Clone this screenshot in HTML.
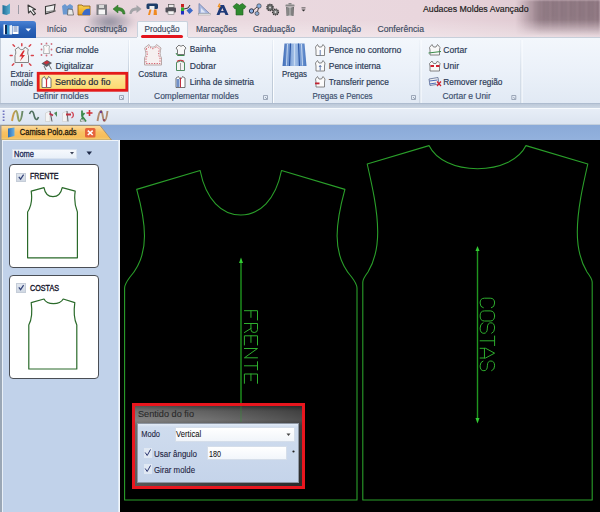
<!DOCTYPE html>
<html><head><meta charset="utf-8">
<style>
*{margin:0;padding:0;box-sizing:border-box}
html,body{width:600px;height:512px;overflow:hidden;background:#000;font-family:"Liberation Sans",sans-serif;position:relative}
.a{position:absolute}
svg{position:absolute;overflow:visible}
</style></head><body>
<!-- TITLE BAR -->
<div class="a" style="left:0;top:0;width:600px;height:38px;background:linear-gradient(90deg,#e6d3da 0%,#ead9df 40%,#e9d6dd 70%,#dcc5cd 100%)"></div>
<div class="a" style="left:0;top:20px;width:600px;height:18px;background:linear-gradient(rgba(255,255,255,0) ,rgba(255,255,255,0.35))"></div>
<div class="a" style="left:515px;top:0px;width:85px;height:36px;background:rgba(85,62,74,0.5);-webkit-mask-image:linear-gradient(90deg,transparent 0%,#000 30%),linear-gradient(#000 55%,transparent 100%);-webkit-mask-composite:source-in;mask-composite:intersect;filter:blur(1px)"></div>
<div class="a" style="left:520px;top:0px;width:80px;height:32px;background:repeating-linear-gradient(90deg,rgba(40,28,36,0.22) 0px,rgba(40,28,36,0) 3px,rgba(40,28,36,0.18) 6px,rgba(40,28,36,0) 9px);-webkit-mask-image:linear-gradient(90deg,transparent 0%,#000 35%),linear-gradient(#000 50%,transparent 100%);-webkit-mask-composite:source-in;mask-composite:intersect;filter:blur(1.2px)"></div>
<div class="a" style="left:88px;top:10px;width:48px;height:22px;background:radial-gradient(ellipse at 45% 55%,rgba(70,80,105,0.55) 0%,rgba(70,80,105,0) 70%);filter:blur(2px)"></div>
<!-- tab row line -->
<div class="a" style="left:0;top:37px;width:600px;height:1px;background:#c7cfda"></div>
<!-- app button -->
<div class="a" style="left:0;top:21px;width:36px;height:17px;background:linear-gradient(#4a82d4,#2a62b8 50%,#1f55aa);border-radius:0 3px 0 0"></div>
<!-- Producao tab -->
<div class="a" style="left:136.5px;top:21px;width:51px;height:18px;background:linear-gradient(#f8fafd,#f1f5fa);border:1px solid #c9d2dd;border-bottom:none;border-radius:2px 2px 0 0"></div>
<svg style="left:0;top:0" width="320" height="22">
<defs>
<linearGradient id="bk" x1="0" y1="0" x2="1" y2="0"><stop offset="0" stop-color="#1e6e98"/><stop offset="1" stop-color="#5aaed0"/></linearGradient>
<linearGradient id="fold" x1="0" y1="0" x2="0" y2="1"><stop offset="0" stop-color="#f8d050"/><stop offset="1" stop-color="#e8a020"/></linearGradient>
<linearGradient id="trash" x1="0" y1="0" x2="1" y2="0"><stop offset="0" stop-color="#6a6a6a"/><stop offset="0.5" stop-color="#c8c8c8"/><stop offset="1" stop-color="#5a5a5a"/></linearGradient>
</defs>
<!-- app icon -->
<path d="M2.5,5 L6.5,6 L10,3.5 L10,13.5 L6.5,15 L2.5,14 Z" fill="url(#bk)"/>
<rect x="18" y="5" width="1" height="9" fill="#9a9aa4"/>
<!-- arrow cursor -->
<path d="M28,5 L28.5,13 L30.5,11 L33.5,15 L35.5,13.5 L32.5,10 L35.5,9.5 Z" fill="#f4f4f4" stroke="#3a3a3a" stroke-width="1.1" stroke-linejoin="round"/>
<!-- paper -->
<path d="M45.5,6.5 C49,6 52,5.5 55,4.5 L54,11.5 C51,12 48.5,13 45.5,14 Z" fill="#eeeeee" stroke="#3a3a3a" stroke-width="1.1"/>
<path d="M46,12 C49,11.5 52,10.5 56,11" fill="none" stroke="#555" stroke-width="0.8"/>
<!-- blue shirt + hand -->
<path d="M62,6 L65,4 L67,6 L70,4 L73,6 L72,14.5 L63,14.5 Z" fill="#6a98d0"/>
<path d="M68,9 L72.5,9.5 L73.5,15 L67.5,15 Z" fill="#e8e8e8" stroke="#555" stroke-width="0.7"/>
<!-- folder -->
<path d="M78,5 L82,5 L83,6 L90,6 L90,15 L78,15 Z" fill="url(#fold)" stroke="#8a5a10" stroke-width="0.8"/>
<path d="M82,14 C84,9 87,8 90,9 L90,15 L83,15 Z" fill="#3a6ac8"/>
<!-- floppy -->
<rect x="96.5" y="4.5" width="10.5" height="10.5" fill="#7a7a80"/>
<rect x="98.5" y="9.5" width="6.5" height="5" fill="#f6f6f6"/>
<rect x="99" y="5" width="5" height="3" fill="#d8d8d8"/>
<!-- undo -->
<path d="M125,14 C125,9.5 122,7.5 118,7.5 L118,5 L113,9 L118,13 L118,10.5 C120.5,10.5 122.5,11.5 123,14 Z" fill="#3c8a34" stroke="#2a6a24" stroke-width="0.5"/>
<!-- redo -->
<path d="M129.5,14 C129.5,9.5 132.5,7.5 136.5,7.5 L136.5,5 L141.5,9 L136.5,13 L136.5,10.5 C134,10.5 132,11.5 131.5,14 Z" fill="#a4a4a8"/>
<!-- figure -->
<rect x="146.5" y="3.5" width="11.5" height="5.5" rx="1.5" fill="#1e3e6a"/>
<rect x="149.5" y="6" width="5" height="4" fill="#f0f0f0"/>
<path d="M148,15 L149.5,9.5 L151.5,9.5 L150,15 Z M153.5,15 L154,9.5 L156.5,9.5 L157,15 Z" fill="#f08a20"/>
<!-- printer -->
<rect x="168.5" y="4.5" width="5.5" height="3" fill="#eaeaea" stroke="#555" stroke-width="0.7"/>
<rect x="165.5" y="7.5" width="10.5" height="5" rx="1" fill="#505058"/>
<rect x="168" y="11" width="6" height="3.5" fill="#f4f4f4" stroke="#666" stroke-width="0.5"/>
<!-- colorful network -->
<rect x="181" y="4" width="3" height="3.5" fill="#c82020"/>
<rect x="181" y="7.5" width="3" height="3.5" fill="#30b030"/>
<rect x="181" y="11" width="3" height="3.5" fill="#2030c0"/>
<path d="M184,9 L188,8 L190,5" stroke="#333" stroke-width="1" fill="none"/>
<path d="M186.5,10.5 L190,7.5 L193,10.5 L189.5,14 Z" fill="#3a68c8"/>
<!-- triangle ruler -->
<path d="M199,3.5 L199,14 L210,14 Z" fill="#a8b8e0" stroke="#7080a8" stroke-width="0.8"/>
<path d="M201,8 L201,12.5 L205.5,12.5 Z" fill="#dfe6f5"/>
<rect x="198.5" y="13.5" width="12" height="1.5" fill="#f0f0f0" stroke="#888" stroke-width="0.4"/>
<!-- A with lightning -->
<path d="M216.5,15 L220.5,5 L224,5 L228.5,15 L225.5,15 L222.3,8 L219.5,15 Z" fill="#1e3a78"/><rect x="220" y="11" width="5" height="1.6" fill="#1e3a78"/>
<path d="M219,3.5 L217.5,7 L219,7 L218,10 L221,6 L219.5,6 L220.5,3.5 Z" fill="#f09020"/>
<!-- green shirt -->
<path d="M233,6.5 L236.5,3.5 L238.5,4.5 C239,5.5 240,5.5 240.5,4.5 L242.5,3.5 L246,6.5 L244,9 L243,8.5 L243,15 L236,15 L236,8.5 L235,9 Z" fill="#2f8a2f" stroke="#1f5f1f" stroke-width="0.6"/>
<!-- network -->
<circle cx="251.5" cy="11" r="2.2" fill="#8ab0e0" stroke="#223" stroke-width="0.9"/>
<circle cx="259" cy="6" r="2.2" fill="#8ab0e0" stroke="#333" stroke-width="0.6"/>
<circle cx="257" cy="13.5" r="2" fill="#8aa8d0" stroke="#333" stroke-width="0.6"/>
<path d="M253.5,10 L257,7 M258.5,8 L257.5,11.5" stroke="#333" stroke-width="0.9"/>
<!-- gears -->
<circle cx="270" cy="7.5" r="3.2" fill="#6a6a6a" stroke="#333" stroke-width="1.2" stroke-dasharray="1.2,0.8"/>
<circle cx="275.5" cy="12" r="3" fill="#7a7a7a" stroke="#333" stroke-width="1.2" stroke-dasharray="1.2,0.8"/>
<circle cx="270" cy="7.5" r="1" fill="#ddd"/><circle cx="275.5" cy="12" r="0.9" fill="#ddd"/>
<!-- trash -->
<rect x="285.5" y="4.5" width="9" height="2" rx="0.6" fill="#888"/>
<rect x="288.5" y="3" width="3" height="1.5" fill="#888"/>
<path d="M286,7 L294,7 L293.5,16 L286.5,16 Z" fill="url(#trash)"/>
<path d="M288.3,8 L288.3,15 M290,8 L290,15 M291.7,8 L291.7,15" stroke="#555" stroke-width="0.5"/>
<!-- dropdown -->
<rect x="301.5" y="7.5" width="4" height="0.8" fill="#333"/>
<path d="M301.5,9.5 L305.5,9.5 L303.5,11.5 Z" fill="#333"/>
</svg>
<!-- app button icon -->
<svg style="left:0;top:0" width="40" height="40">
<rect x="3.5" y="24.5" width="2" height="10" fill="#ffffff"/>
<path d="M6,24.5 L9.5,25.5 L9.5,34.5 L6,34.5 Z" fill="#3a9ad0"/>
<rect x="5" y="25" width="2" height="9" fill="#0a2a5a"/>
<path d="M9.5,25.5 L12,25 L12,34.5 L9.5,34.5 Z" fill="#e8f0fa"/>
<rect x="12.5" y="26" width="6" height="8" fill="#ffffff"/>
<path d="M13.5,27 h4 M13.5,29 h4 M13.5,31 h4" stroke="#3a5aa0" stroke-width="0.8"/>
<path d="M25.5,28.5 L31,28.5 L28.25,31.5 Z" fill="#ffffff"/>
</svg>

<!-- RIBBON -->
<div class="a" style="left:0;top:38px;width:600px;height:66px;background:linear-gradient(#f3f7fc 0%,#ebf1f9 50%,#e1e9f4 100%)"></div>
<div class="a" style="left:136.5px;top:37px;width:51px;height:2px;background:#f5f8fc"></div>
<div class="a" style="left:140.5px;top:35.4px;width:42px;height:2.8px;background:#e3141c;border-radius:1.5px"></div>
<svg style="left:0;top:0" width="600" height="110">
<defs>
<linearGradient id="sepg" x1="0" y1="0" x2="0" y2="1"><stop offset="0" stop-color="#d6dfea" stop-opacity="0.3"/><stop offset="0.5" stop-color="#c4cfdc"/><stop offset="1" stop-color="#bac6d5"/></linearGradient>
<linearGradient id="hlg" x1="0" y1="0" x2="0" y2="1"><stop offset="0" stop-color="#fde9a2"/><stop offset="0.5" stop-color="#fde184"/><stop offset="1" stop-color="#fcd86e"/></linearGradient>
<linearGradient id="pleat" x1="0" y1="0" x2="1" y2="0"><stop offset="0" stop-color="#3e6cb8"/><stop offset="0.5" stop-color="#a8c4ea"/><stop offset="1" stop-color="#4a78c0"/></linearGradient>
</defs>
<!-- separators -->
<g fill="url(#sepg)">
<rect x="128" y="40" width="1" height="63"/><rect x="272" y="40" width="1" height="63"/><rect x="419.5" y="40" width="1" height="63"/><rect x="520.5" y="40" width="1" height="63"/>
</g>
<g fill="#fbfdff"><rect x="129" y="40" width="1" height="63"/><rect x="273" y="40" width="1" height="63"/><rect x="420.5" y="40" width="1" height="63"/><rect x="521.5" y="40" width="1" height="63"/></g>
<rect x="0" y="38" width="1" height="66" fill="#c5ced9"/>
<!-- launchers -->
<g fill="none" stroke="#8a96a8" stroke-width="0.8">
<path d="M119.5,95.5 h4 v4 h-4 z M121,97 l2,2"/>
<path d="M263.5,95.5 h4 v4 h-4 z M265,97 l2,2"/>
<path d="M411.5,95.5 h4 v4 h-4 z M413,97 l2,2"/>
<path d="M511.8,95.5 h4 v4 h-4 z M513.3,97 l2,2"/>
</g>
<!-- highlight box -->
<rect x="38.2" y="73.3" width="88.6" height="17" fill="url(#hlg)" stroke="#e31b1b" stroke-width="2.8"/>
<!-- Extrair icon -->
<g stroke="#d8444c" stroke-width="1.5" stroke-linecap="round">
<path d="M21.8,43.8 L21.8,45.8 M13,44.8 L14.5,46.3 M30.7,44.8 L29.2,46.3 M10.2,55.5 L12.2,55.5 M31.3,55.5 L33.3,55.5 M12.3,65.3 L13.8,63.8 M21.8,64.5 L21.8,66.3 M30.9,65.3 L29.4,63.8"/>
</g>
<path d="M15.2,49.5 L18.5,47 C19.5,50.5 24,50.5 25,47 L28.3,49.5 C27.5,52 27.5,54 28.5,55.5 L28.5,62.5 L15,62.5 L15,55.5 C16,54 16,52 15.2,49.5 Z" fill="#f4f4f4" stroke="#777" stroke-width="0.9"/>
<path d="M23.2,50.5 L19.3,56.5 L22,56.5 L19.8,61.5 L25,55 L22.5,55 L24.8,50.5 Z" fill="#d82b30"/>
<!-- Criar molde icon -->
<g fill="#d07080"><circle cx="41.5" cy="44" r="0.9"/><circle cx="46.5" cy="43.5" r="0.9"/><circle cx="51.5" cy="44" r="0.9"/><circle cx="41.5" cy="49.5" r="0.9"/><circle cx="51.5" cy="49.5" r="0.9"/><circle cx="41.5" cy="55" r="0.9"/><circle cx="46.5" cy="55.5" r="0.9"/><circle cx="51.5" cy="55" r="0.9"/></g>
<path d="M43.5,46 L45.5,45 C46,46.5 47,46.5 47.5,45 L49.5,46 L49,49 L49.5,53.5 L43.5,53.5 L44,49 Z" fill="#fafafa" stroke="#999" stroke-width="0.7"/>
<!-- Digitalizar icon -->
<path d="M41.5,63.5 L47,60 L52,63 L46.5,67 Z" fill="#5a5a62"/>
<path d="M43.5,62.5 L47,60.8 L49.5,62.5 L46,64.5 Z" fill="#c8303a"/>
<path d="M44,66 L46,70 M49,65 L51.5,69.5" stroke="#6a6a6a" stroke-width="1"/>
<!-- Sentido icon -->
<path d="M42,78.5 L44.5,76.5 L45.5,79 L47.5,79 L48.5,76.5 L51,78.5 L51,87.5 L42,87.5 Z" fill="#fff" stroke="#555" stroke-width="0.8"/>
<path d="M46.5,79 L46.5,87" stroke="#d03040" stroke-width="1.2"/>
<!-- Costura icon -->
<path d="M144.5,48 L149,44.5 C150,48 155.5,48 156.5,44.5 L161,48 C160,52 159.5,55 161.5,58 L161.5,65 L144.5,65 L144.5,58 C146.5,55 146,52 144.5,48 Z" fill="#f6f0f0" stroke="#b8a8a8" stroke-width="1"/>
<path d="M146,49 L149.5,46.5 C151,49.5 154.5,49.5 156,46.5 L159.5,49 C158.5,52.5 158,55 160,58 L160,63.5 L146,63.5 L146,58 C148,55 147.5,52.5 146,49 Z" fill="none" stroke="#d05060" stroke-width="0.9" stroke-dasharray="1.3,1.3"/>
<!-- Bainha icon -->
<path d="M176,48 L179,45 C180,46.5 182,46.5 183,45 L186,48 L184.5,50 L184.5,54.5 L177.5,54.5 L177.5,50 Z" fill="#f8f8f8" stroke="#555" stroke-width="0.8"/>
<path d="M176,53 L177.5,55.5 L184.5,55.5" fill="none" stroke="#3a8a4a" stroke-width="1"/>
<!-- Dobrar icon -->
<path d="M176.5,62.5 Q180.5,59.5 184.5,62.5 L184.5,70.5 L176.5,70.5 Z" fill="#f4f4f4" stroke="#3d8050" stroke-width="0.9"/>
<path d="M177,61.5 Q180.5,59 184,61.5" fill="none" stroke="#c03038" stroke-width="1.2"/>
<path d="M180.5,63 L180.5,70" stroke="#777" stroke-width="0.7"/>
<!-- Linha icon -->
<path d="M176,78 L178.5,76.5 L179.5,78.5 L181.5,78.5 L182.5,76.5 L185,78 L185,87.5 L176,87.5 Z" fill="#fff" stroke="#555" stroke-width="0.8"/>
<rect x="176.5" y="79" width="3" height="8" fill="#7090c8"/>
<path d="M180.5,77.5 L180.5,87.5" stroke="#c03040" stroke-width="1"/>
<!-- Pregas icon -->
<path d="M284.5,43.5 L304.5,43.5 L306.5,66 L282.5,66 Z" fill="url(#pleat)"/>
<path d="M290.5,43.5 L289.5,66 M298.5,43.5 L299.5,66" stroke="#2f5aa8" stroke-width="1.2"/>
<path d="M287.5,44 L286.5,65.5 M294.5,44 L294.5,65.5 M301.5,44 L302.5,65.5" stroke="#c8daf2" stroke-width="1"/>
<!-- Pence icons -->
<g fill="#fbfbfb" stroke="#6a6a6a" stroke-width="0.8">
<path d="M315.5,47 L317.5,44.5 L319,47 L321.5,47 L323,44.5 L325,47 L324.5,50 L324.5,55.5 L316,55.5 L316,50 Z"/>
<path d="M315.5,63 L317.5,60.5 L319,63 L321.5,63 L323,60.5 L325,63 L324.5,66 L324.5,71 L316,71 L316,66 Z"/>
<path d="M315.5,79 L317.5,76.5 L319,79 L321.5,79 L323,76.5 L325,79 L324.5,82 L324.5,87 L316,87 L316,82 Z"/>
</g>
<path d="M320.2,50 L320.2,55.5 M320.2,65.5 L320.2,70.5 M319,67 L320.2,65.5 L321.4,67" stroke="#4060a0" stroke-width="0.8" fill="none"/>
<rect x="315" y="82.5" width="4.5" height="1.8" fill="#c02030"/>
<!-- Cortar icons -->
<path d="M429.5,47.5 L432,44.5 L433.5,47 L436,47 L437.5,44.5 L440,47.5 L439.5,50 L439.5,55 L430,55 L430,50 Z" fill="#f8f8f8" stroke="#666" stroke-width="0.8"/>
<path d="M428.5,53 L441,51.5" stroke="#3a8a4a" stroke-width="1"/>
<path d="M429.5,63.5 L432,61 L433.5,63.5 L436,63.5 L437.5,61 L440,63.5 L439.5,66 L439.5,71 L430,71 L430,66 Z" fill="#f8f8f8" stroke="#666" stroke-width="0.8"/>
<path d="M430.5,66 h3.5 M436,66 h3.5" stroke="#d02030" stroke-width="2"/>
<path d="M429,79 L438,77.5 L439,84 L430,85.5 Z" fill="#f2f2f2" stroke="#5a6a90" stroke-width="0.8"/>
<path d="M429.5,81 L437.5,80 M429.5,84 L436,83" stroke="#3a5ab0" stroke-width="0.9"/>
<path d="M437,81.5 L441,86 M441,81.5 L437,86" stroke="#d02030" stroke-width="1.2"/>
</svg>

<!-- BAND / TOOLSTRIP -->
<div class="a" style="left:0;top:103px;width:600px;height:1px;background:#aebccf"></div>
<div class="a" style="left:0;top:104px;width:600px;height:4px;background:linear-gradient(#bcc8d8,#cdd7e4)"></div>
<div class="a" style="left:0;top:108px;width:600px;height:17px;background:linear-gradient(#e8eef7,#dbe4f0)"></div>
<div class="a" style="left:0;top:108px;width:600px;height:1px;background:#f7fafd"></div>
<div class="a" style="left:0;top:124px;width:600px;height:1px;background:#c3cfdd"></div>
<svg style="left:0;top:0" width="130" height="130">
<g fill="#6f72c0"><rect x="2.7" y="110.5" width="1.8" height="1.5"/><rect x="2.7" y="113.5" width="1.8" height="1.5"/><rect x="2.7" y="116.5" width="1.8" height="1.5"/><rect x="2.7" y="119.5" width="1.8" height="1.5"/></g>
<defs><linearGradient id="wv1" x1="0" y1="0" x2="1" y2="0"><stop offset="0" stop-color="#d29a4a"/><stop offset="0.6" stop-color="#8fa060"/><stop offset="1" stop-color="#6a8a6a"/></linearGradient></defs>
<path d="M12,121 C13,115 14.5,111 16,111 C18,111 17.5,121 19.5,121 C21,121 22,115 22.5,111" fill="none" stroke="url(#wv1)" stroke-width="2"/>
<path d="M29.5,114 C31,110 33,110.5 34,115 C35,120 37,121 38.5,117" fill="none" stroke="#4f6f5f" stroke-width="1.6"/>
<path d="M45.5,113 L50,111 L50,121.5 L45.5,121.5 Z" fill="#f4f4f4" stroke="#c8c8c8" stroke-width="0.6"/>
<path d="M50,111 L52,121.5" stroke="#5a5a5a" stroke-width="1"/>
<path d="M49.5,113.5 L53,115.5" stroke="#b8304a" stroke-width="2"/>
<path d="M54,113 L57,111.5 L57,117 Z" fill="#4f8a5a"/>
<path d="M62.5,113 L67,111 L67,121.5 L62.5,121.5 Z" fill="#f4f4f4" stroke="#cdcdcd" stroke-width="0.6"/>
<path d="M67,111 L68,121.5" stroke="#6a6a6a" stroke-width="1"/>
<path d="M66,114.5 L71,114.5" stroke="#c03040" stroke-width="2"/>
<path d="M71.5,112 C74,113 74,117 71.5,118" fill="none" stroke="#d04050" stroke-width="1.3"/>
<path d="M82,110.5 L82,116 L86,121.5 M82,116 L84.5,113 M80.5,121.5 L83,117" stroke="#3d8a4a" stroke-width="1.8" fill="none"/>
<path d="M81,119 L85,121 L80.5,121.5 Z" fill="#e8e8e8" stroke="#888" stroke-width="0.5"/>
<path d="M89.5,110 L89.5,116 M86.5,113 L92.5,113" stroke="#d03038" stroke-width="1.6"/>
<path d="M97.5,121 C98.5,115 99.5,111 101,111 C103,111 102.5,121 104.5,121 C106,121 107,115 107.5,111" fill="none" stroke="#b08a70" stroke-width="1.9"/>
<circle cx="101" cy="112" r="1.2" fill="#6a3a8a"/><circle cx="104" cy="120" r="1.1" fill="#8a3a5a"/>
</svg>

<!-- DOC TABS -->
<div class="a" style="left:0;top:125px;width:600px;height:15px;background:linear-gradient(#8aaad8,#93b1dd)"></div>
<svg style="left:0;top:0" width="600" height="150">
<defs><linearGradient id="tabg" x1="0" y1="0" x2="0" y2="1">
<stop offset="0" stop-color="#fcdca0"/><stop offset="0.45" stop-color="#f9c264"/><stop offset="0.8" stop-color="#f6bd58"/><stop offset="1" stop-color="#f4d27a"/></linearGradient>
<linearGradient id="bookg" x1="0" y1="0" x2="1" y2="0"><stop offset="0" stop-color="#2f6fb5"/><stop offset="1" stop-color="#6ab0e0"/></linearGradient></defs>
<path d="M0,125.5 L100,125.5 L111.5,140 L0,140 Z" fill="url(#tabg)" stroke="#a08a6a" stroke-width="0.8"/>
<rect x="0" y="125" width="1.5" height="15" fill="#9a9aa0"/>
<path d="M8,128.5 L14.5,127.5 L14.5,136 L8,137.5 Z" fill="url(#bookg)"/>
<rect x="85" y="128" width="10.5" height="9.5" rx="1.5" fill="#e5643c"/>
<path d="M87.8,130.6 L92.7,135 M92.7,130.6 L87.8,135" stroke="#fff" stroke-width="1.6"/>
</svg>

<!-- PANEL -->
<div class="a" style="left:0;top:140px;width:120px;height:372px;background:#c1d2ea"></div>
<div class="a" style="left:0;top:140px;width:2px;height:372px;background:#9aa7b6"></div>
<div class="a" style="left:2px;top:140px;width:1px;height:372px;background:#e9f0f8"></div>
<div class="a" style="left:2px;top:140px;width:118px;height:1px;background:#eef3f9"></div>
<div class="a" style="left:118px;top:140px;width:1px;height:372px;background:#dfe9f5"></div>
<div class="a" style="left:119px;top:140px;width:1px;height:372px;background:#f4f8fc"></div>
<!-- combo -->
<div class="a" style="left:12px;top:149px;width:65px;height:10px;background:linear-gradient(#f6f9fd,#e9f0f9);border:1px solid #d8e2ef"></div>
<svg style="left:0;top:0" width="120" height="512">
<path d="M70,152 L74,152 L72,154.5 Z" fill="#3a4258"/>
<path d="M86.5,151.5 L92,151.5 L89.25,155 Z" fill="#1e2a48"/>
</svg>
<!-- cards -->
<div class="a" style="left:8.5px;top:164px;width:90.5px;height:103.5px;background:#fff;border:1.3px solid #4a4e55;border-radius:4px"></div>
<div class="a" style="left:8.5px;top:275px;width:90.5px;height:103.5px;background:#fff;border:1.3px solid #4a4e55;border-radius:4px"></div>
<!-- checkboxes -->
<div class="a" style="left:16px;top:172.5px;width:10px;height:9.5px;background:linear-gradient(#e2e7ef,#d0d8e3);border:1px solid #c5cdd8"></div>
<div class="a" style="left:16px;top:283px;width:10px;height:9.5px;background:linear-gradient(#e2e7ef,#d0d8e3);border:1px solid #c5cdd8"></div>
<svg style="left:0;top:0" width="120" height="512">
<path d="M18.8,176.8 L20.6,179.2 L23.6,174.6" fill="none" stroke="#34447a" stroke-width="1.2"/>
<path d="M18.8,287.3 L20.6,289.7 L23.6,285.1" fill="none" stroke="#34447a" stroke-width="1.2"/>
<g fill="none" stroke="#2a6a2a" stroke-width="1.2" stroke-linejoin="round">
<path d="M27.6,257.8 L27.6,212 C31.5,206 32.5,200 31.2,191.2 L44,187.6 C45,193.5 48,196.6 53,196.6 C58,196.6 61,193.5 62.2,187.6 L75.2,191.2 C73.9,200 74.9,206 77.4,212 L77.4,257.8 Z"/>
<path d="M28.8,369 L28.8,325 C32,319 32.5,312 31.2,302.6 L44,299 C45.5,302 48.5,303.7 53.5,303.7 C58.5,303.7 61.5,302 63.2,299 L74.8,302.6 C73.5,312 74,319 76.8,325 L76.8,369 Z"/>
</g>
</svg>

<!-- CANVAS -->
<div class="a" style="left:120px;top:140px;width:480px;height:372px;background:#000"></div>
<svg style="left:0;top:0" width="600" height="512" viewBox="0 0 600 512">
<g fill="none" stroke="#2a9f2a" stroke-width="1.1" stroke-linejoin="round">
<path d="M124.6,500 L124.6,288 C124.6,285 127,281 130,277 C138,268 144.5,255 144.5,236 C144.5,222 141,205 136.7,189.4 L200.1,170.5 C206,200 222,215 240.8,215 C259.6,215 275.6,200 281.5,170.5 L344.9,189.4 C340.6,205 337.1,222 337.1,236 C337.1,255 343.6,268 351.6,277 C354.6,281 357,285 357,288 L357,500 Z"/>
<path d="M362.8,500 L362.8,282 C362.8,279 365,276 368,272 C374,262 377.7,250 377.7,232 C377.7,210 372,185 367.2,164 L429,145.6 C436,160 455,168.8 477.5,168.8 C500,168.8 519,160 526,145.6 L587.8,164 C583,185 577.3,210 577.3,232 C577.3,250 581,262 587,272 C590,276 592.2,279 592.2,282 L592.2,500 Z"/>
</g>
<g stroke="#1f951f" stroke-width="1.4" fill="#3c3">
<line x1="241" y1="261" x2="241" y2="440"/>
<path d="M241,257.5 L243,263 L239,263 Z" stroke="none"/>
<line x1="477.5" y1="249" x2="477.5" y2="420"/>
<path d="M477.5,246 L479.5,251 L475.5,251 Z" stroke="none"/>
<path d="M477.5,423.5 L479.5,418 L475.5,418 Z" stroke="none"/>
</g>
<!--STROKETEXT--><g fill="none" stroke="#2eae2e" stroke-width="1.0" stroke-linecap="round" stroke-linejoin="round"><path d="M 244.40,310.70 L 257.50,310.70 L 257.50,320.00 M 250.95,310.70 L 250.95,317.40 M 244.40,323.50 L 257.50,323.50 L 257.50,329.62 Q 257.50,332.50 254.22,332.50 Q 250.95,332.50 250.95,329.62 L 250.95,323.50 M 250.95,328.45 L 244.40,332.50 M 257.50,345.00 L 257.50,335.80 L 244.40,335.80 L 244.40,345.00 M 250.95,335.80 L 250.95,342.42 M 244.40,348.50 L 257.50,348.50 L 244.40,357.80 L 257.50,357.80 M 257.50,361.70 L 257.50,369.90 M 257.50,365.80 L 244.40,365.80 M 257.50,383.30 L 257.50,374.00 L 244.40,374.00 L 244.40,383.30 M 250.95,374.00 L 250.95,380.70"/><path d="M 491.41,307.80 Q 494.60,307.32 494.60,303.00 Q 494.60,298.20 490.25,298.20 L 484.45,298.20 Q 480.10,298.20 480.10,303.00 Q 480.10,307.32 483.29,307.80 M 494.60,315.95 Q 494.60,321.00 490.25,321.00 L 484.45,321.00 Q 480.10,321.00 480.10,315.95 Q 480.10,310.90 484.45,310.90 L 490.25,310.90 Q 494.60,310.90 494.60,315.95 Z M 491.70,333.30 Q 494.60,332.25 494.60,328.05 Q 494.60,322.80 490.83,322.80 Q 487.35,322.80 487.35,328.05 Q 487.35,333.30 483.87,333.30 Q 480.10,333.30 480.10,328.05 Q 480.10,323.85 483.00,322.80 M 494.60,336.00 L 494.60,345.60 M 494.60,340.80 L 480.10,340.80 M 480.10,348.30 L 485.61,348.30 L 494.60,353.15 L 485.61,358.00 L 480.10,358.00 M 484.45,348.30 L 484.45,358.00 M 491.70,370.70 Q 494.60,369.73 494.60,365.85 Q 494.60,361.00 490.83,361.00 Q 487.35,361.00 487.35,365.85 Q 487.35,370.70 483.87,370.70 Q 480.10,370.70 480.10,365.85 Q 480.10,361.97 483.00,361.00"/></g><!--/STROKETEXT-->
</svg>

<div class="a" style="left:131.7px;top:402.7px;width:173.5px;height:86.5px;border:3.2px solid #e8161e;background:#1a1a1a"></div>
<div class="a" style="left:134.9px;top:405.9px;width:167px;height:80px;background:linear-gradient(#3a3a3a 0px,#5c5c5c 5px,#6e6e6e 14px,#555 20px,#3c3c3c 100%)"></div>
<div class="a" style="left:134.9px;top:405.9px;width:167px;height:80px;background:linear-gradient(90deg,rgba(255,255,255,0.14) 0%,rgba(255,255,255,0.02) 45%,rgba(0,0,0,0.2) 85%,rgba(0,0,0,0.3) 100%)"></div>
<div class="a" style="left:240.3px;top:406px;width:1.5px;height:16px;background:rgba(40,160,40,0.22)"></div>
<div class="a" style="left:136.7px;top:422.5px;width:162px;height:60px;background:linear-gradient(#e3ebf6 0px,#cfdcee 3px,#c5d4ea 100%);border:1px solid #8d96a3"></div>
<!-- checkboxes -->
<div class="a" style="left:143.5px;top:448px;width:8.5px;height:9.5px;background:rgba(230,236,245,0.8)"></div>
<div class="a" style="left:143.5px;top:464px;width:8.5px;height:9.5px;background:rgba(230,236,245,0.8)"></div>
<!-- combo -->
<div class="a" style="left:174.5px;top:427.3px;width:120px;height:14.5px;background:linear-gradient(#ffffff,#f1f5fa);border:1px solid #d5deea"></div>
<svg style="left:0;top:0" width="600" height="512"><path d="M286.5,433.5 L290.5,433.5 L288.5,436 Z" fill="#444"/>
<circle cx="293.5" cy="451.5" r="1.1" fill="#222"/>
<path d="M145.2,452.5 L147.2,455.5 L150.5,449.5" fill="none" stroke="#2a3570" stroke-width="1"/>
<path d="M145.2,468.5 L147.2,471.5 L150.5,465.5" fill="none" stroke="#2a3570" stroke-width="1"/>
</svg>
<!-- input -->
<div class="a" style="left:206.6px;top:446px;width:80.2px;height:14.4px;background:linear-gradient(#ffffff,#f2f6fb);border:1px solid #d5deea"></div>

<svg style="left:0;top:0" width="600" height="512" font-family="Liberation Sans">
<text x="423" y="12.2" font-size="9.6" fill="#1b1b1b" stroke="#1b1b1b" stroke-width="0.18" font-weight="normal" textLength="105.5" lengthAdjust="spacingAndGlyphs" >Audaces Moldes Avançado</text>
<text x="46.7" y="32.3" font-size="8.8" fill="#3a4960" stroke="#3a4960" stroke-width="0.15" font-weight="normal" textLength="20.0" lengthAdjust="spacingAndGlyphs" >Início</text>
<text x="84" y="32.3" font-size="8.8" fill="#3a4960" stroke="#3a4960" stroke-width="0.15" font-weight="normal" textLength="43" lengthAdjust="spacingAndGlyphs" >Construção</text>
<text x="144.5" y="32.3" font-size="8.8" fill="#3a4960" stroke="#3a4960" stroke-width="0.15" font-weight="normal" textLength="35.2" lengthAdjust="spacingAndGlyphs" >Produção</text>
<text x="196" y="32.3" font-size="8.8" fill="#3a4960" stroke="#3a4960" stroke-width="0.15" font-weight="normal" textLength="41" lengthAdjust="spacingAndGlyphs" >Marcações</text>
<text x="253" y="32.3" font-size="8.8" fill="#3a4960" stroke="#3a4960" stroke-width="0.15" font-weight="normal" textLength="42" lengthAdjust="spacingAndGlyphs" >Graduação</text>
<text x="312" y="32.3" font-size="8.8" fill="#3a4960" stroke="#3a4960" stroke-width="0.15" font-weight="normal" textLength="49" lengthAdjust="spacingAndGlyphs" >Manipulação</text>
<text x="377.5" y="32.3" font-size="8.8" fill="#3a4960" stroke="#3a4960" stroke-width="0.15" font-weight="normal" textLength="46.5" lengthAdjust="spacingAndGlyphs" >Conferência</text>
<text x="10.5" y="76.8" font-size="8.8" fill="#2b3a55" stroke="#2b3a55" stroke-width="0.18" font-weight="normal" textLength="22.5" lengthAdjust="spacingAndGlyphs" >Extrair</text>
<text x="10.5" y="86.2" font-size="8.8" fill="#2b3a55" stroke="#2b3a55" stroke-width="0.18" font-weight="normal" textLength="22.5" lengthAdjust="spacingAndGlyphs" >molde</text>
<text x="55.6" y="52.5" font-size="8.8" fill="#2b3a55" stroke="#2b3a55" stroke-width="0.18" font-weight="normal" textLength="43" lengthAdjust="spacingAndGlyphs" >Criar molde</text>
<text x="55.6" y="68.5" font-size="8.8" fill="#2b3a55" stroke="#2b3a55" stroke-width="0.18" font-weight="normal" textLength="37.7" lengthAdjust="spacingAndGlyphs" >Digitalizar</text>
<text x="55" y="84.8" font-size="8.8" fill="#1f2a3c" stroke="#1f2a3c" stroke-width="0.18" font-weight="normal" textLength="55.5" lengthAdjust="spacingAndGlyphs" >Sentido do fio</text>
<text x="33" y="98.7" font-size="8.8" fill="#3c4f6e" stroke="#3c4f6e" stroke-width="0.18" font-weight="normal" textLength="55.5" lengthAdjust="spacingAndGlyphs" >Definir moldes</text>
<text x="138.3" y="76.8" font-size="8.8" fill="#2b3a55" stroke="#2b3a55" stroke-width="0.18" font-weight="normal" textLength="28.9" lengthAdjust="spacingAndGlyphs" >Costura</text>
<text x="189.8" y="52.3" font-size="8.8" fill="#2b3a55" stroke="#2b3a55" stroke-width="0.18" font-weight="normal" textLength="25.9" lengthAdjust="spacingAndGlyphs" >Bainha</text>
<text x="189.8" y="68.5" font-size="8.8" fill="#2b3a55" stroke="#2b3a55" stroke-width="0.18" font-weight="normal" textLength="26.2" lengthAdjust="spacingAndGlyphs" >Dobrar</text>
<text x="189.8" y="85" font-size="8.8" fill="#2b3a55" stroke="#2b3a55" stroke-width="0.18" font-weight="normal" textLength="64.2" lengthAdjust="spacingAndGlyphs" >Linha de simetria</text>
<text x="154.1" y="98.7" font-size="8.8" fill="#3c4f6e" stroke="#3c4f6e" stroke-width="0.18" font-weight="normal" textLength="84.6" lengthAdjust="spacingAndGlyphs" >Complementar moldes</text>
<text x="282" y="76.8" font-size="8.8" fill="#2b3a55" stroke="#2b3a55" stroke-width="0.18" font-weight="normal" textLength="25" lengthAdjust="spacingAndGlyphs" >Pregas</text>
<text x="328.8" y="52.5" font-size="8.8" fill="#2b3a55" stroke="#2b3a55" stroke-width="0.18" font-weight="normal" textLength="72.5" lengthAdjust="spacingAndGlyphs" >Pence no contorno</text>
<text x="328.8" y="68.5" font-size="8.8" fill="#2b3a55" stroke="#2b3a55" stroke-width="0.18" font-weight="normal" textLength="52" lengthAdjust="spacingAndGlyphs" >Pence interna</text>
<text x="328.8" y="85" font-size="8.8" fill="#2b3a55" stroke="#2b3a55" stroke-width="0.18" font-weight="normal" textLength="60" lengthAdjust="spacingAndGlyphs" >Transferir pence</text>
<text x="312.5" y="98.7" font-size="8.8" fill="#3c4f6e" stroke="#3c4f6e" stroke-width="0.18" font-weight="normal" textLength="60" lengthAdjust="spacingAndGlyphs" >Pregas e Pences</text>
<text x="443.3" y="52.5" font-size="8.8" fill="#2b3a55" stroke="#2b3a55" stroke-width="0.18" font-weight="normal" textLength="23.7" lengthAdjust="spacingAndGlyphs" >Cortar</text>
<text x="443.3" y="68.5" font-size="8.8" fill="#2b3a55" stroke="#2b3a55" stroke-width="0.18" font-weight="normal" textLength="15.7" lengthAdjust="spacingAndGlyphs" >Unir</text>
<text x="443.3" y="85" font-size="8.8" fill="#2b3a55" stroke="#2b3a55" stroke-width="0.18" font-weight="normal" textLength="59.2" lengthAdjust="spacingAndGlyphs" >Remover região</text>
<text x="442.5" y="98.5" font-size="8.8" fill="#3c4f6e" stroke="#3c4f6e" stroke-width="0.18" font-weight="normal" textLength="48.3" lengthAdjust="spacingAndGlyphs" >Cortar e Unir</text>
<text x="19.8" y="135.3" font-size="9" fill="#22180c" stroke="#22180c" stroke-width="0.3" font-weight="normal" textLength="56.8" lengthAdjust="spacingAndGlyphs" >Camisa Polo.ads</text>
<text x="14" y="157.2" font-size="8.5" fill="#1d2a58" stroke="#1d2a58" stroke-width="0.3" font-weight="normal" textLength="20" lengthAdjust="spacingAndGlyphs" >Nome</text>
<text x="30" y="179.3" font-size="8.5" fill="#15152a" stroke="#15152a" stroke-width="0.35" font-weight="normal" textLength="28.5" lengthAdjust="spacingAndGlyphs" >FRENTE</text>
<text x="30" y="290.6" font-size="8.5" fill="#15152a" stroke="#15152a" stroke-width="0.35" font-weight="normal" textLength="29" lengthAdjust="spacingAndGlyphs" >COSTAS</text>
<text x="138" y="416.7" font-size="9" fill="#2a2a2a" stroke="#2a2a2a" stroke-width="0.1" font-weight="normal" textLength="56" lengthAdjust="spacingAndGlyphs" >Sentido do fio</text>
<text x="141.3" y="437" font-size="8.5" fill="#1d2340" stroke="#1d2340" stroke-width="0.1" font-weight="normal" textLength="18.7" lengthAdjust="spacingAndGlyphs" >Modo</text>
<text x="176" y="437" font-size="8.5" fill="#111" stroke="#111" stroke-width="0.05" font-weight="normal" textLength="25.3" lengthAdjust="spacingAndGlyphs" >Vertical</text>
<text x="154" y="456.7" font-size="8.5" fill="#1d2340" stroke="#1d2340" stroke-width="0.1" font-weight="normal" textLength="43" lengthAdjust="spacingAndGlyphs" >Usar ângulo</text>
<text x="209" y="457" font-size="8.5" fill="#111" stroke="#111" stroke-width="0.05" font-weight="normal" textLength="12" lengthAdjust="spacingAndGlyphs" >180</text>
<text x="154" y="473" font-size="8.5" fill="#1d2340" stroke="#1d2340" stroke-width="0.1" font-weight="normal" textLength="41" lengthAdjust="spacingAndGlyphs" >Girar molde</text>
</svg>
</body></html>
